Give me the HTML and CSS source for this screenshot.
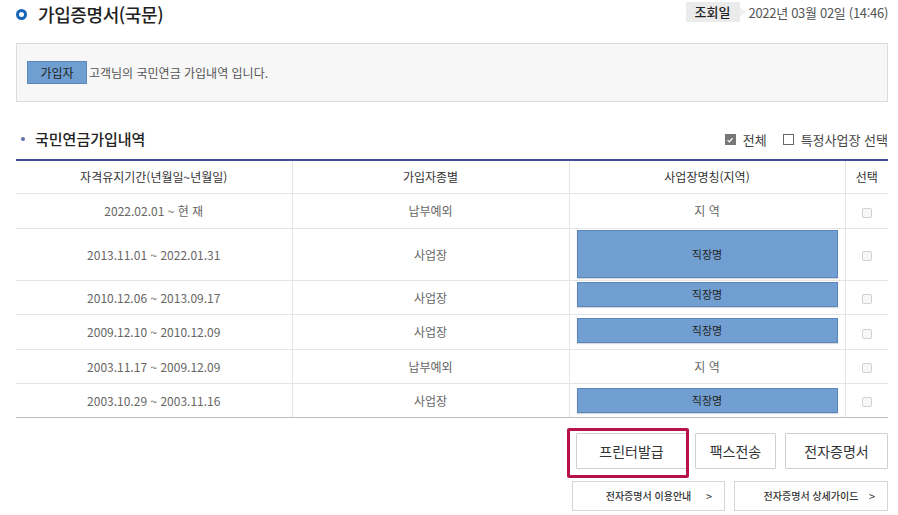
FILE: index.html
```html
<!DOCTYPE html>
<html lang="ko">
<head>
<meta charset="utf-8">
<link rel="stylesheet" href="styles.css">
</head>
<body>
<div class="page">
  <div class="top">
    <h1 class="title"><span class="ring"></span>가입증명서(국문)</h1>
    <div class="inquiry">
      <span class="badge">조회일</span>
      <span class="date">2022년 03월 02일 (14:46)</span>
    </div>
  </div>

  <div class="infobox">
    <span class="btn-member">가입자</span>
    <span class="info-text">고객님의 국민연금 가입내역 입니다.</span>
  </div>

  <div class="sec-head">
    <h2 class="sec-title"><span class="dot"></span>국민연금가입내역</h2>
    <div class="filters">
      <label class="chk"><span class="box checked"><svg viewBox="0 0 10 10" width="8" height="8"><path d="M2 5.2 L4.2 7.3 L8 2.8" fill="none" stroke="#fff" stroke-width="1.6"/></svg></span>전체</label>
      <label class="chk"><span class="box"></span>특정사업장 선택</label>
    </div>
  </div>

  <table class="grid">
    <thead>
      <tr>
        <th class="c1">자격유지기간(년월일~년월일)</th>
        <th class="c2">가입자종별</th>
        <th class="c3">사업장명칭(지역)</th>
        <th class="c4">선택</th>
      </tr>
    </thead>
    <tbody>
      <tr class="r35">
        <td>2022.02.01 ~ 현 재</td>
        <td>납부예외</td>
        <td>지 역</td>
        <td><span class="cb"></span></td>
      </tr>
      <tr class="r52">
        <td>2013.11.01 ~ 2022.01.31</td>
        <td>사업장</td>
        <td class="biz"><span class="bluebox tall">직장명</span></td>
        <td><span class="cb"></span></td>
      </tr>
      <tr class="r34">
        <td>2010.12.06 ~ 2013.09.17</td>
        <td>사업장</td>
        <td class="biz p2"><span class="bluebox">직장명</span></td>
        <td><span class="cb"></span></td>
      </tr>
      <tr class="r35">
        <td>2009.12.10 ~ 2010.12.09</td>
        <td>사업장</td>
        <td class="biz p4"><span class="bluebox">직장명</span></td>
        <td><span class="cb"></span></td>
      </tr>
      <tr class="r34">
        <td>2003.11.17 ~ 2009.12.09</td>
        <td>납부예외</td>
        <td>지 역</td>
        <td><span class="cb"></span></td>
      </tr>
      <tr class="r34 last">
        <td>2003.10.29 ~ 2003.11.16</td>
        <td>사업장</td>
        <td class="biz p5"><span class="bluebox">직장명</span></td>
        <td><span class="cb"></span></td>
      </tr>
    </tbody>
  </table>

  <div class="actions">
    <div class="hl-wrap">
      <button class="btn w111">프린터발급</button>
      <span class="highlight"></span>
    </div>
    <button class="btn w81">팩스전송</button>
    <button class="btn w103">전자증명서</button>
  </div>
  <div class="links">
    <a class="link w153">전자증명서 이용안내</a>
    <a class="link w154">전자증명서 상세가이드</a>
  </div>
</div>
</body>
</html>
```

FILE: styles.css
```css
* { box-sizing: border-box; }
html, body { margin: 0; padding: 0; background: #fff; }
body {
  font-family: "Noto Sans CJK KR", "Noto Sans", sans-serif;
  color: #555;
  width: 898px;
  height: 515px;
  overflow: hidden;
}
.page { padding: 0 10px 0 16px; }

.top {
  display: flex;
  justify-content: space-between;
  align-items: flex-start;
  height: 43px;
}
.title {
  margin: 0;
  display: flex;
  align-items: center;
  gap: 11px;
  font-size: 18px;
  font-weight: 500;
  color: #222;
  height: 28px;
  letter-spacing: -0.4px;
}
.ring {
  width: 11px;
  height: 11px;
  border: 3px solid #1566b8;
  border-radius: 50%;
  display: inline-block;
  margin-top: 1px;
}
.inquiry {
  display: flex;
  align-items: center;
  gap: 9px;
  margin-top: 2px;
}
.badge {
  position: relative;
  background: #ebebeb;
  color: #222;
  font-size: 13px;
  font-weight: 500;
  height: 20px;
  line-height: 20px;
  padding: 0 9px;
}
.badge::after {
  content: "";
  position: absolute;
  right: -6px;
  top: 5px;
  border-left: 6px solid #f1f1f1;
  border-top: 5px solid transparent;
  border-bottom: 5px solid transparent;
}
.date { font-size: 13px; color: #555; letter-spacing: -0.3px; }

.infobox {
  height: 59px;
  border: 1px solid #dcdcdc;
  background: #f7f7f7;
  display: flex;
  align-items: center;
  padding-left: 10px;
}
.btn-member {
  width: 60px;
  height: 23px;
  background: #6f9fd0;
  border: 1px solid #5b87ba;
  color: #222;
  font-size: 12px;
  text-align: center;
  line-height: 21px;
}
.info-text { font-size: 12px; color: #555; margin-left: 2px; }

.sec-head {
  height: 57px;
  display: flex;
  justify-content: space-between;
  align-items: flex-end;
  padding-bottom: 10px;
}
.sec-title {
  margin: 0;
  font-size: 15px;
  font-weight: 500;
  color: #222;
  display: flex;
  align-items: center;
  gap: 10px;
  padding-left: 5px;
}
.dot {
  width: 4px;
  height: 4px;
  border-radius: 50%;
  background: #5b6fa9;
  display: inline-block;
}
.filters { display: flex; gap: 16px; font-size: 13px; color: #444; }
.chk { display: flex; align-items: center; gap: 7px; }
.box {
  width: 11px;
  height: 11px;
  border: 1px solid #666;
  display: inline-flex;
  align-items: center;
  justify-content: center;
  background: #fff;
}
.box.checked { background: #777; border-color: #777; }

.grid {
  width: 872px;
  border-collapse: collapse;
  table-layout: fixed;
  border-top: 2px solid #3e4f9a;
}
.grid th, .grid td {
  border: 1px solid #e5e5e5;
  text-align: center;
  padding: 0;
}
.grid tr > :first-child { border-left: none; }
.grid tr > :last-child { border-right: none; }
.grid th {
  height: 33px;
  font-size: 12px;
  font-weight: 400;
  color: #333;
  border-top: none;
}
.c1 { width: 276px; }
.c2 { width: 277px; }
.c3 { width: 276px; }
.c4 { width: 43px; }
.grid td { font-size: 12px; color: #666; }
.r35 td { height: 35px; }
.r34 td { height: 34px; }
.r52 td { height: 52px; }
.grid tr.last td { border-bottom: 1px solid #bdbdbd; }
.biz { padding: 1px 7px !important; vertical-align: middle; }
.biz.p2 { vertical-align: top; padding-top: 1px !important; }
.biz.p4 { vertical-align: top; padding-top: 3px !important; }
.biz.p5 { vertical-align: top; padding-top: 4px !important; }
.bluebox {
  display: flex;
  align-items: center;
  justify-content: center;
  height: 25px;
  background: #719fd1;
  border: 1px solid #5a86bb;
  color: #222;
  font-size: 11px;
  font-weight: 400;
  box-shadow: 0 1px 1px rgba(0,0,0,0.15);
}
.bluebox.tall { height: 48px; }
.cb {
  display: inline-block;
  width: 10px;
  height: 10px;
  border: 1px solid #d0d0d0;
  border-radius: 2px;
  background: #f7f7f7;
  vertical-align: middle;
}

.actions {
  display: flex;
  justify-content: flex-end;
  gap: 8px;
  margin-top: 15px;
}
.btn {
  height: 36px;
  border: 1px solid #cfcfcf;
  background: #fff;
  font-family: inherit;
  font-size: 14px;
  color: #333;
  padding: 0;
  border-radius: 1px;
}
.w111 { width: 111px; }
.w81 { width: 81px; }
.w103 { width: 103px; margin-left: 1px; }
.hl-wrap { position: relative; display: flex; }
.highlight {
  position: absolute;
  left: -9px;
  right: -2px;
  top: -5px;
  bottom: -9px;
  border: 3px solid #b8124a;
  border-radius: 2px;
  pointer-events: none;
}
.links {
  display: flex;
  justify-content: flex-end;
  gap: 9px;
  margin-top: 12px;
}
.link {
  position: relative;
  height: 30px;
  border: 1px solid #d5d5d5;
  display: flex;
  align-items: center;
  justify-content: center;
  font-size: 10px;
  font-weight: 500;
  color: #333;
}
.link::after {
  content: ">";
  position: absolute;
  right: 12px;
  top: 50%;
  transform: translateY(-50%);
  font-size: 11px;
  font-weight: 400;
}
.w153 { width: 153px; }
.w154 { width: 154px; }
```
